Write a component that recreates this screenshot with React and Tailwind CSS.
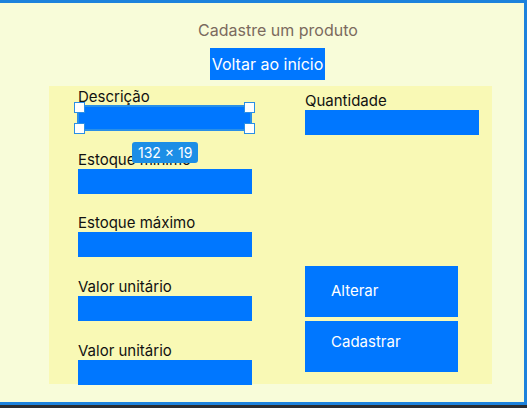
import React from 'react';

const Field = ({ label, selected, className = '' }) => (
    <div className={className}>
        <label className="block text-[15px] leading-[17px] text-[#111]">{label}</label>
        {selected ? (
            <div className="relative h-[26px] w-[175px] border-2 border-[#2a8fe6] bg-[#0077ff] -ml-[1px]">
                {/* selection handles */}
                <span className="absolute -left-[5px] -top-[5px] w-[11px] h-[11px] bg-white border border-[#2a8fe6]" />
                <span className="absolute -right-[5px] -top-[5px] w-[11px] h-[11px] bg-white border border-[#2a8fe6]" />
                <span className="absolute -left-[5px] -bottom-[5px] w-[11px] h-[11px] bg-white border border-[#2a8fe6]" />
                <span className="absolute -right-[5px] -bottom-[5px] w-[11px] h-[11px] bg-white border border-[#2a8fe6]" />
                <span className="absolute left-[53px] top-[35px] z-10 rounded-[3px] bg-[#1c8ee6] px-[6px] py-[1px] text-[14px] leading-[19px] text-white whitespace-nowrap">
                    132 × 19
                </span>
            </div>
        ) : (
            <div className="h-[25px] w-[174px] bg-[#0077ff] mt-[1px]" />
        )}
    </div>
);

const App = () => {
    return (
        <div className="w-[527px] h-[408px] flex flex-col bg-[#2b2d31]" style={{ fontFamily: 'Inter, "Noto Sans", sans-serif' }}>
            <div className="flex-1 bg-[#f8fcd9] border-t-[3px] border-r-[3px] border-b-[3px] border-[#1d82dc] flex flex-col items-center">
                <h1 className="mt-[17px] ml-[32px] text-[16px] leading-[20px] text-[#7b6a5e]">Cadastre um produto</h1>
                <button className="mt-[8px] ml-[11px] h-[32px] px-[2px] bg-[#0077ff] text-white text-[16px] leading-[20px]">
                    Voltar ao início
                </button>

                <div className="mt-[6px] ml-[49px] self-start w-[443px] h-[298px] bg-[#f9f9b5] flex">
                    {/* left column */}
                    <div className="pl-[29px] pt-[2px] flex flex-col">
                        <Field label="Descrição" selected />
                        <Field label="Estoque mínimo" className="mt-[20px]" />
                        <Field label="Estoque máximo" className="mt-[20px]" />
                        <Field label="Valor unitário" className="mt-[21px]" />
                        <Field label="Valor unitário" className="mt-[21px]" />
                    </div>

                    {/* right column */}
                    <div className="ml-[53px] pt-[6px] flex flex-col">
                        <label className="block text-[15px] leading-[17px] text-[#111]">Quantidade</label>
                        <div className="h-[25px] w-[174px] bg-[#0077ff] mt-[1px]" />

                        <button className="mt-[131px] h-[51px] w-[153px] bg-[#0077ff] text-white text-[15px] text-left pl-[26px]">
                            Alterar
                        </button>
                        <button className="mt-[4px] h-[51px] w-[153px] bg-[#0077ff] text-white text-[15px] text-left pl-[26px] pb-[8px]">
                            Cadastrar
                        </button>
                    </div>
                </div>
            </div>
            <div className="h-[3px] bg-[#2b2d31]" />
        </div>
    );
};

export default App;
